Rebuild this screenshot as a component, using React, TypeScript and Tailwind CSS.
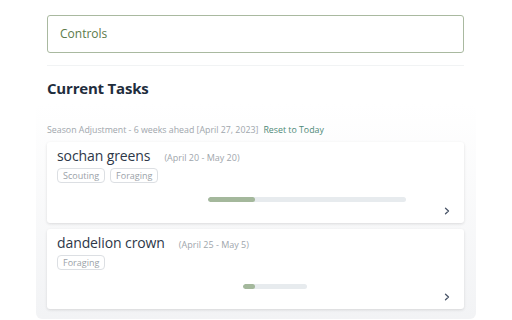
import React from "react";

const Tag = ({ label }: { label: string }) => (
  <span className="inline-flex items-center h-[15px] px-[5px] rounded-[4px] border border-[#dcdfe3] text-[9px] leading-none text-[#9aa1a8]">
    {label}
  </span>
);

const Chevron = () => (
  <svg width="8" height="8" viewBox="0 0 8 8" className="text-[#4a5568]">
    <path d="M2.5 1.2 L5.5 4 L2.5 6.8" fill="none" stroke="currentColor" strokeWidth="1.3" strokeLinecap="round" strokeLinejoin="round" />
  </svg>
);

type Task = {
  name: string;
  range: string;
  tags: string[];
  barLeft: number;
  barWidth: number;
  fill: number;
  h: string;
};

const tasks: Task[] = [
  { name: "sochan greens", range: "(April 20 - May 20)", tags: ["Scouting", "Foraging"], barLeft: 161, barWidth: 198, fill: 47, h: "h-[81px]" },
  { name: "dandelion crown", range: "(April 25 - May 5)", tags: ["Foraging"], barLeft: 196, barWidth: 64, fill: 12, h: "h-[80px]" },
];

export default function App() {
  return (
    <div className="w-[512px] h-[320px] bg-white overflow-hidden" style={{ fontFamily: "'Open Sans', 'Noto Sans', sans-serif" }}>
      <div className="w-[417px] ml-[47px] pt-[15px]">
        <div className="h-[38px] rounded-[3px] border border-[#a9b9a0] flex items-center pl-[12px] text-[12px] text-[#5b7a4a]">
          Controls
        </div>
        <div className="mt-[12px] border-t border-[#f1f3f4]" />
        <div className="mt-[11px] text-[15px] font-bold text-[#1f2d3d] tracking-[-0.2px]">Current Tasks</div>
      </div>
      <div className="mt-[4px] w-[440px] ml-[36px] pl-[11px] pr-[12px] pt-[20px] pb-[10px] bg-gradient-to-b from-white to-[#f2f3f5] rounded-[6px]">
        <div className="flex items-center text-[8.8px] text-[#a0a6ac] h-[14px]">
          <span>Season Adjustment - 6 weeks ahead [April 27, 2023]</span>
          <span className="ml-[5px] text-[#4f8a78]">Reset to Today</span>
        </div>
        <div className="mt-[4px] flex flex-col gap-[6px]">
          {tasks.map((t) => (
            <div key={t.name} className={`relative ${t.h} bg-white rounded-[3px] shadow-[0_1px_3px_rgba(0,0,0,0.12)] pl-[10px] pt-[3px]`}>
              <div className="flex items-baseline">
                <span className="text-[14px] text-[#2d3748] tracking-[-0.1px]">{t.name}</span>
                <span className="ml-[14px] text-[9px] text-[#a0a6ac]">{t.range}</span>
              </div>
              <div className="mt-[2px] flex gap-[5px]">
                {t.tags.map((g) => (
                  <Tag key={g} label={g} />
                ))}
              </div>
              <div
                className="absolute h-[5px] rounded-full bg-[#e7ebee] overflow-hidden"
                style={{ left: t.barLeft, width: t.barWidth, bottom: t.name === "sochan greens" ? 21 : 20 }}
              >
                <div className="h-full rounded-full bg-[#a4b89c]" style={{ width: t.fill }} />
              </div>
              <div className="absolute right-[13px] bottom-[8px]">
                <Chevron />
              </div>
            </div>
          ))}
        </div>
      </div>
    </div>
  );
}
